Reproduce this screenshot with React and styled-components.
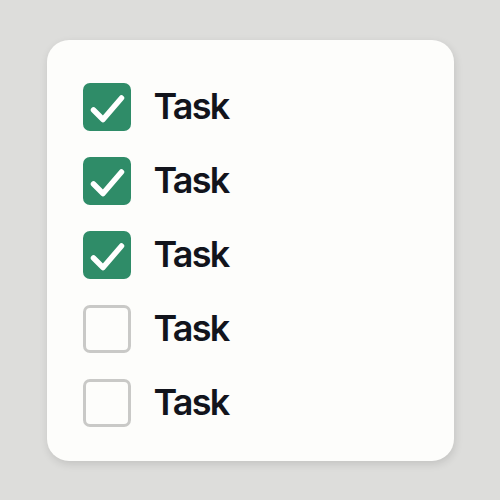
import React from 'react'
import styled, { createGlobalStyle } from 'styled-components'

const Global = createGlobalStyle`
  html, body {
    margin: 0;
    padding: 0;
    background: #dddddb;
  }
`

const Page = styled.div`
  width: 500px;
  height: 500px;
  display: flex;
  align-items: center;
  justify-content: center;
  background: #dddddb;
`

const Card = styled.div`
  width: 407px;
  height: 421px;
  box-sizing: border-box;
  background: #fdfdfb;
  border-radius: 22px;
  box-shadow: 1px 3px 8px rgba(0, 0, 0, 0.12);
  padding: 43px 36px;
  display: flex;
  flex-direction: column;
  gap: 26px;
`

const Row = styled.div`
  display: flex;
  align-items: center;
  gap: 23px;
  height: 48px;
`

const Box = styled.div`
  width: 48px;
  height: 48px;
  flex: none;
  box-sizing: border-box;
  border-radius: 7px;
  display: flex;
  align-items: center;
  justify-content: center;
  background: ${p => (p.checked ? '#2f8c68' : '#fdfdfb')};
  border: ${p => (p.checked ? 'none' : '3px solid #c9c9c7')};
`

const Label = styled.span`
  font-family: Inter, sans-serif;
  font-weight: 600;
  font-size: 36px;
  letter-spacing: -1.8px;
  color: #12141c;
  line-height: 1;
  padding-bottom: 2px;
`

const Check = () => (
  <svg width="48" height="48" viewBox="0 0 48 48">
    <path d="M10.5 27 L20 36.5 L38.5 15" fill="none" stroke="#fff" strokeWidth="5.5" strokeLinecap="round" strokeLinejoin="round" />
  </svg>
)

const tasks = [true, true, true, false, false]

export default function App() {
  return (
    <Page>
      <Global />
      <Card>
        {tasks.map((done, i) => (
          <Row key={i}>
            <Box checked={done}>{done && <Check />}</Box>
            <Label>Task</Label>
          </Row>
        ))}
      </Card>
    </Page>
  )
}
